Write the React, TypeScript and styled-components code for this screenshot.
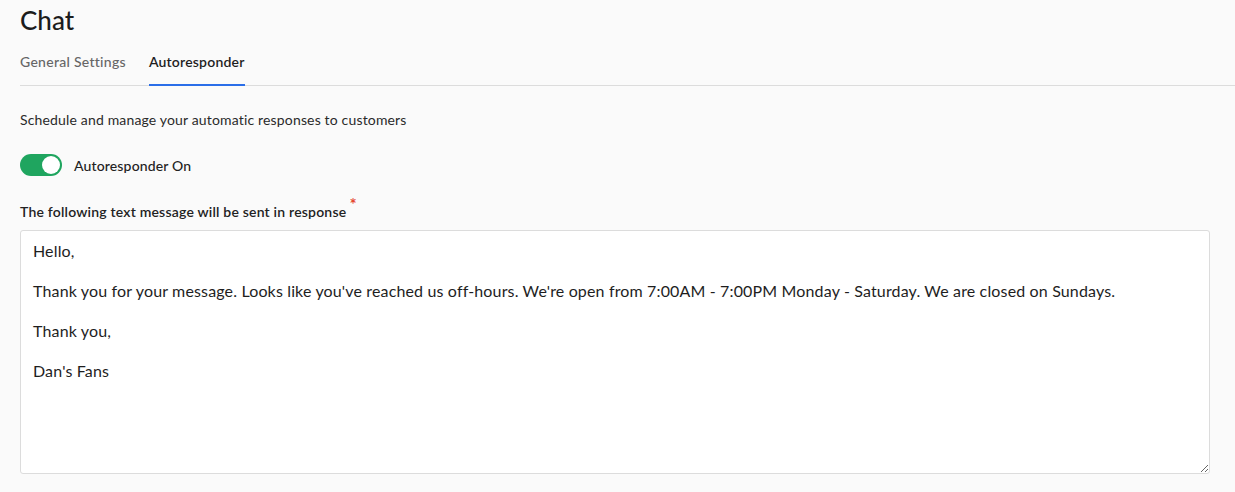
import React, { useState } from "react";
import styled, { createGlobalStyle } from "styled-components";

const GlobalStyle = createGlobalStyle`
	html, body {
		margin: 0;
		padding: 0;
		background-color: #fafafa;
		font-family: Lato, "Noto Sans", sans-serif;
		color: #222;
	}
`;

const StyledPage = styled.main`
	display: flex;
	flex-direction: column;
	padding: 0 0 0 20px;
	height: 492px;
	box-sizing: border-box;
`;

const StyledTitle = styled.h1`
	margin: 0;
	padding-top: 4px;
	font-size: 26px;
	line-height: 32px;
	font-weight: 500;
	color: #1c1c1c;
`;

const StyledTabs = styled.nav`
	display: flex;
	gap: 23px;
	margin-top: 16px;
	border-bottom: 1px solid #dcdcdc;
`;

interface TabProps {
	active?: boolean;
}

const StyledTab = styled.button<TabProps>`
	padding: 0 0 12px;
	margin-bottom: -1px;
	background: transparent;
	border: none;
	border-bottom: 2px solid ${({ active }) => (active ? "#2a6ee8" : "transparent")};
	font-family: inherit;
	font-size: 14px;
	line-height: 20px;
	letter-spacing: ${({ active }) => (active ? "0.2px" : "0.28px")};
	font-weight: ${({ active }) => (active ? 600 : 500)};
	color: ${({ active }) => (active ? "#1f1f1f" : "#666")};
	cursor: pointer;
`;

const StyledDescription = styled.p`
	margin: 25px 0 0;
	font-size: 14px;
	line-height: 18px;
	letter-spacing: 0.16px;
	color: #2a2a2a;
`;

const StyledToggleRow = styled.label`
	display: flex;
	align-items: center;
	gap: 12px;
	margin-top: 25px;
	font-size: 14px;
	letter-spacing: 0.15px;
	font-weight: 500;
	color: #222;
	cursor: pointer;
`;

interface SwitchProps {
	on: boolean;
}

const StyledSwitch = styled.span<SwitchProps>`
	position: relative;
	display: inline-block;
	width: 42px;
	height: 22px;
	border-radius: 11px;
	background-color: ${({ on }) => (on ? "#1fa55f" : "#c8c8c8")};

	&:after {
		content: "";
		position: absolute;
		top: 2px;
		left: ${({ on }) => (on ? "22px" : "2px")};
		width: 18px;
		height: 18px;
		border-radius: 50%;
		background-color: #fff;
		transition: left 0.2s ease-in-out;
	}
`;

const StyledFieldLabel = styled.div`
	margin-top: 27px;
	font-size: 14px;
	line-height: 18px;
	letter-spacing: 0.2px;
	font-weight: 600;
	color: #222;
`;

const StyledRequired = styled.sup`
	margin-left: 3px;
	color: #e5492f;
	font-size: 17px;
	line-height: 0;
`;

const StyledTextArea = styled.textarea`
	margin: 9px 25px 0 0;
	padding: 10px 12px;
	height: 244px;
	box-sizing: border-box;
	background-color: #fff;
	border: 1px solid #dcdcdc;
	border-radius: 3px;
	font-family: inherit;
	font-size: 16px;
	line-height: 20px;
	letter-spacing: 0.15px;
	color: #1e1e1e;
	resize: vertical;
	outline: none;
`;

const message = `Hello,

Thank you for your message. Looks like you've reached us off-hours. We're open from 7:00AM - 7:00PM Monday - Saturday. We are closed on Sundays.

Thank you,

Dan's Fans`;

const tabs = ["General Settings", "Autoresponder"];

const App = () => {
	const [activeTab, setActiveTab] = useState<string>("Autoresponder");
	const [isOn, setIsOn] = useState<boolean>(true);
	const [text, setText] = useState<string>(message);

	return (
		<>
			<GlobalStyle />
			<StyledPage>
				<StyledTitle>Chat</StyledTitle>
				<StyledTabs>
					{tabs.map((tab) => (
						<StyledTab key={tab} active={tab === activeTab} onClick={() => setActiveTab(tab)}>
							{tab}
						</StyledTab>
					))}
				</StyledTabs>
				<StyledDescription>Schedule and manage your automatic responses to customers</StyledDescription>
				<StyledToggleRow onClick={() => setIsOn(!isOn)}>
					<StyledSwitch on={isOn} />
					Autoresponder On
				</StyledToggleRow>
				<StyledFieldLabel>
					The following text message will be sent in response
					<StyledRequired>*</StyledRequired>
				</StyledFieldLabel>
				<StyledTextArea value={text} onChange={(e) => setText(e.target.value)} />
			</StyledPage>
		</>
	);
};

export default App;
